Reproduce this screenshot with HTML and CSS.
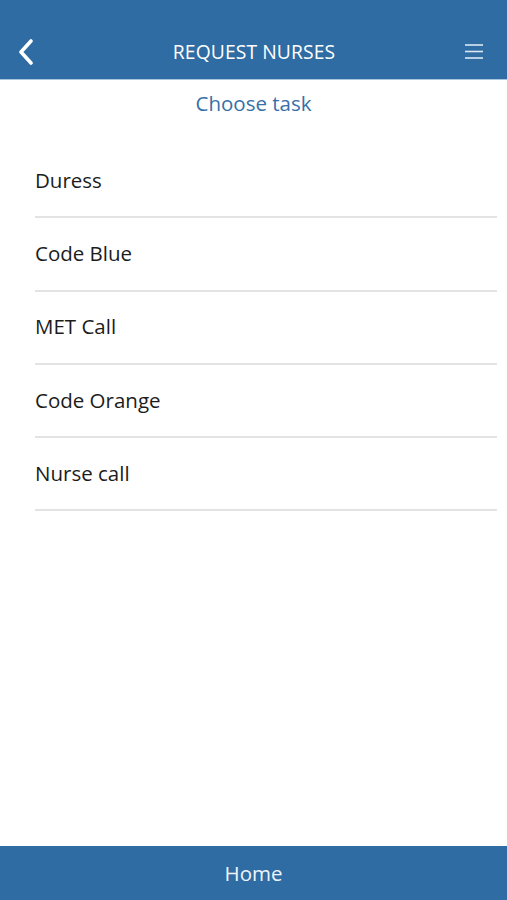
FILE: index.html
```html
<!DOCTYPE html>
<html lang="en">
<head>
    <meta charset="UTF-8">
    <meta name="viewport" content="width=device-width, initial-scale=1.0">
    <title>Request Nurses</title>
    <link rel="stylesheet" href="styles.css">
</head>
<body>
    <header class="topbar">
        <div class="navrow">
            <button class="icon-btn back" type="button" aria-label="Back">
                <svg width="18" height="26" viewBox="0 0 18 26">
                    <polyline points="14,2 4,13 14,24" fill="none" stroke="#fff" stroke-width="3.6" stroke-linecap="round" stroke-linejoin="round"/>
                </svg>
            </button>
            <h1 class="title">REQUEST NURSES</h1>
            <button class="icon-btn menu" type="button" aria-label="Menu">
                <svg width="20" height="18" viewBox="0 0 20 18">
                    <line x1="1" y1="2" x2="19" y2="2" stroke="#dce8f3" stroke-width="1.6"/>
                    <line x1="1" y1="8.5" x2="19" y2="8.5" stroke="#dce8f3" stroke-width="1.6"/>
                    <line x1="1" y1="15" x2="19" y2="15" stroke="#dce8f3" stroke-width="1.6"/>
                </svg>
            </button>
        </div>
    </header>

    <main class="content">
        <p class="subtitle">Choose task</p>
        <ul class="tasks">
            <li class="task">Duress</li>
            <li class="task">Code Blue</li>
            <li class="task">MET Call</li>
            <li class="task">Code Orange</li>
            <li class="task">Nurse call</li>
        </ul>
    </main>

    <footer class="bottombar">Home</footer>
</body>
</html>
```

FILE: styles.css
```css
* {
    box-sizing: border-box;
}

body {
    font-family: "Open Sans", Arial, sans-serif;
    background-color: #fff;
    margin: 0;
    height: 100vh;
    display: flex;
    flex-direction: column;
}

.topbar {
    background-color: #2e6ca3; /* header blue */
    height: 80px;
    padding-top: 24px;
    border-bottom: 1px solid #a9c6e0;
}

.navrow {
    height: 55px;
    display: grid;
    grid-template-columns: 1fr auto 1fr;
    align-items: center;
    padding: 0 13px 0 14px;
}

.icon-btn {
    background: none;
    border: none;
    padding: 0;
    width: 24px;
    display: flex;
    align-items: center;
    justify-content: center;
}

.menu {
    justify-self: end;
    margin-right: 8px;
}

.title {
    margin: 0;
    color: #fff;
    font-size: 19.3px;
    font-weight: 400;
    letter-spacing: 0.1px;
}

.content {
    flex: 1;
}

.subtitle {
    margin: 0;
    padding-top: 8px;
    height: 65px;
    text-align: center;
    color: #3670a8;
    font-size: 20.5px;
    line-height: 30px;
}

.tasks {
    list-style: none;
    margin: 0 10px 0 35px;
    padding: 0;
}

.task {
    height: 73.3px;
    display: flex;
    align-items: center;
    padding-bottom: 2px;
    border-bottom: 2px solid #e3e3e3;
    color: #1c1c1c;
    font-size: 20.5px;
}

.bottombar {
    background-color: #2e6ca3;
    height: 54px;
    display: flex;
    align-items: center;
    justify-content: center;
    color: #eef4fa;
    font-size: 20.5px;
}
```
